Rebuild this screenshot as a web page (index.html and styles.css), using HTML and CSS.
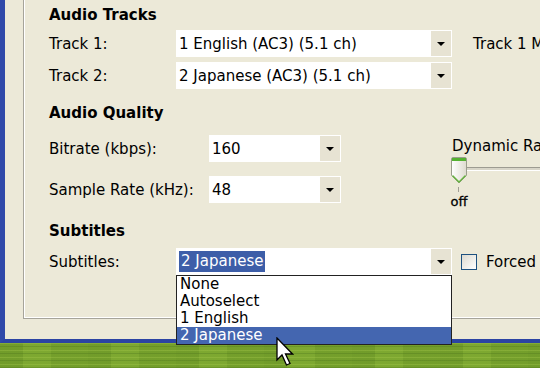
FILE: index.html
```html
<!DOCTYPE html>
<html lang="en">
<head>
  <meta charset="UTF-8">
  <title>Audio &amp; Subtitles</title>
  <link rel="stylesheet" href="styles.css">
</head>
<body>

  <div class="window">
    <div class="group">

      <h2 class="title">Audio Tracks</h2>
      <div class="row first">
        <span class="label">Track 1:</span>
        <div class="combo wide"><span class="value">1 English (AC3) (5.1 ch)</span><span class="btn"></span></div>
        <span class="side">Track 1 Mixdown:</span>
      </div>
      <div class="row second">
        <span class="label">Track 2:</span>
        <div class="combo wide"><span class="value">2 Japanese (AC3) (5.1 ch)</span><span class="btn"></span></div>
      </div>

      <h2 class="title quality-title">Audio Quality</h2>
      <div class="quality">
        <div class="q-left">
          <div class="row">
            <span class="label q">Bitrate (kbps):</span>
            <div class="combo small"><span class="value">160</span><span class="btn"></span></div>
          </div>
          <div class="row second-q">
            <span class="label q">Sample Rate (kHz):</span>
            <div class="combo small"><span class="value">48</span><span class="btn"></span></div>
          </div>
        </div>
        <div class="drc">
          <div class="drc-label">Dynamic Range Compression:</div>
          <div class="slider">
            <div class="groove"></div>
            <svg class="thumb" width="16" height="27" viewBox="0 0 16 27">
              <defs>
                <linearGradient id="tg" x1="0" y1="0" x2="1" y2="0">
                  <stop offset="0" stop-color="#ffffff"/>
                  <stop offset="1" stop-color="#dedbcf"/>
                </linearGradient>
              </defs>
              <path d="M2 0.5 H14 Q15.5 0.5 15.5 2 V18.5 L8 26 L0.5 18.5 V2 Q0.5 0.5 2 0.5 Z" fill="url(#tg)" stroke="#9a9d8c"/>
              <rect x="1" y="1" width="14" height="3" fill="#54b131"/>
              <path d="M1.5 18.5 L8 25 L14.5 18.5" fill="none" stroke="#66b43f" stroke-width="1.4"/>
            </svg>
          </div>
          <div class="tick"></div>
          <div class="off">off</div>
        </div>
      </div>

      <h2 class="title subs-title">Subtitles</h2>
      <div class="row subs">
        <span class="label">Subtitles:</span>
        <div class="combo wide">
          <span class="value"><span class="picked">2 Japanese</span></span><span class="btn"></span>
          <ul class="list">
            <li>None</li>
            <li>Autoselect</li>
            <li>1 English</li>
            <li class="on">2 Japanese</li>
          </ul>
        </div>
        <span class="check"></span>
        <span class="forced">Forced</span>
      </div>

    </div>
  </div>

  <svg class="pointer" width="18" height="30" viewBox="0 0 18 30">
    <path d="M1 1 L1 23 L6 18 L10.5 28 L14 26.5 L9.5 17 L16.5 17 Z" fill="#fff" stroke="#000" stroke-width="1.3" stroke-linejoin="miter"/>
  </svg>

</body>
</html>
```

FILE: styles.css
```css
body {
  margin: 0;
  width: 540px;
  height: 368px;
  overflow: hidden;
  position: relative;
  font-family: "DejaVu Sans", Verdana, sans-serif;
  font-size: 15px;
  color: #000;
  background-color: #77a22c;
  background-image:
    linear-gradient(180deg, rgba(50, 85, 15, 0.45) 0, transparent 8px),
    repeating-linear-gradient(0deg, rgba(70, 110, 25, 0.3) 0 1px, transparent 1px 3px, rgba(165, 200, 75, 0.35) 3px 4px, transparent 4px 7px),
    repeating-linear-gradient(90deg, rgba(90, 130, 35, 0.18) 0 23px, rgba(155, 195, 70, 0.18) 23px 51px, rgba(100, 140, 40, 0.15) 51px 88px);
}

.window {
  width: 760px;
  height: 343px;
  box-sizing: border-box;
  background: #ece9d8;
  border-left: 5px solid #3049a9;
  border-bottom: 4px solid #2b44a3;
  padding-left: 18px;
}

.group {
  height: 319px;
  box-sizing: border-box;
  border-left: 1px solid #a6a49a;
  border-bottom: 1px solid #a6a49a;
  box-shadow: inset 1px -1px 0 #fff;
  padding: 6px 0 0 25px;
}

.title {
  margin: 0;
  font-size: 15px;
  font-weight: bold;
  line-height: 18px;
}

.row {
  display: flex;
  align-items: center;
  height: 27px;
}

.row.first { margin-top: 6px; }
.row.second { margin-top: 5px; }
.row.second-q { margin-top: 14px; }
.row.subs { margin-top: 8px; }

.quality-title { margin-top: 15px; }
.subs-title { margin-top: 13px; }

.label {
  width: 127px;
  flex: none;
}

.label.q {
  width: 160px;
}

.combo {
  position: relative;
  height: 27px;
  box-sizing: border-box;
  background: #fff;
  display: flex;
  align-items: center;
  padding: 1px;
  flex: none;
}

.combo.wide { width: 276px; }
.combo.small { width: 132px; }

.combo .value {
  flex: 1;
  padding-left: 2px;
  white-space: nowrap;
}

.combo .btn {
  width: 20px;
  align-self: stretch;
  background: #e7e3d3;
  display: flex;
  align-items: center;
  justify-content: center;
}

.combo .btn::after {
  content: "";
  border-left: 4px solid transparent;
  border-right: 4px solid transparent;
  border-top: 4px solid #000;
}

.side {
  margin-left: 21px;
  white-space: nowrap;
}

.quality {
  display: flex;
  margin-top: 13px;
}

.q-left {
  width: 403px;
  flex: none;
}

.drc {
  padding-top: 2px;
}

.drc-label {
  line-height: 18px;
  white-space: nowrap;
}

.slider {
  position: relative;
  height: 27px;
  width: 300px;
  margin-top: 2px;
  margin-left: -1px;
}

.groove {
  position: absolute;
  left: 8px;
  top: 10px;
  width: 300px;
  height: 2px;
  background: #d8d5c8;
  border-top: 1px solid #9d9b91;
  border-bottom: 1px solid #fff;
}

.thumb {
  position: absolute;
  left: 0;
  top: 0;
}

.tick {
  width: 1px;
  height: 5px;
  background: #a09e94;
  margin: 3px 0 0 6px;
}

.off {
  width: 18px;
  margin-left: -2px;
  text-align: center;
  font-size: 13px;
  line-height: 14px;
  margin-top: 3px;
  -webkit-text-stroke: 0.3px #000;
}

.picked {
  background: #3d5ea8;
  color: #fff;
  padding: 0 2px;
  line-height: 21px;
  display: inline-block;
}

.list {
  position: absolute;
  top: 100%;
  left: 0;
  width: 276px;
  box-sizing: border-box;
  margin: 0;
  padding: 0;
  list-style: none;
  background: #fff;
  border: 1px solid #222;
  z-index: 2;
}

.list li {
  line-height: 17px;
  padding-left: 3px;
}

.list li.on {
  background: #4466b0;
  color: #fff;
}

.check {
  width: 16px;
  height: 16px;
  box-sizing: border-box;
  border: 1px solid #1d5180;
  background: linear-gradient(135deg, #dcdad0, #ffffff);
  margin-left: 9px;
  flex: none;
}

.forced {
  margin-left: 9px;
}

.pointer {
  position: absolute;
  left: 276px;
  top: 337px;
  z-index: 3;
}
```
